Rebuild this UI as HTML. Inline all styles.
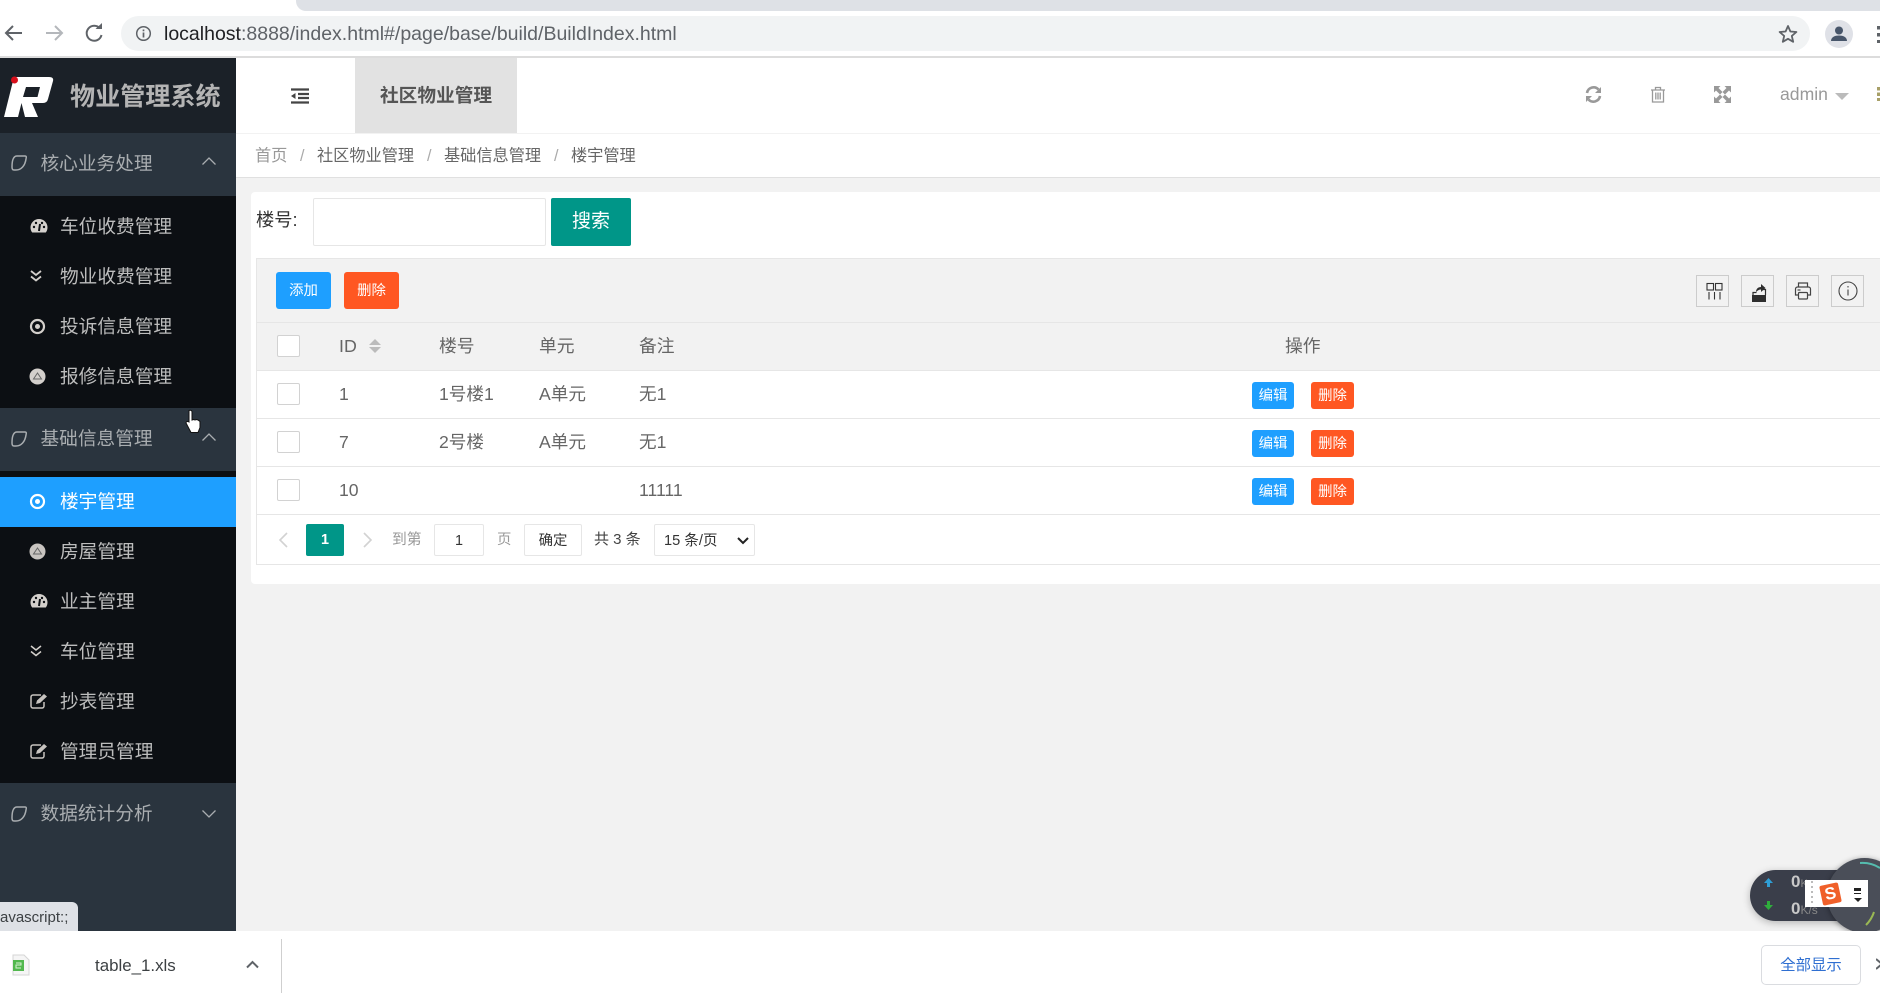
<!DOCTYPE html>
<html lang="zh-CN"><head><meta charset="utf-8"><title>物业管理系统</title>
<style>
*{box-sizing:border-box}
html,body{margin:0;padding:0;width:1880px;height:996px;overflow:hidden;background:#fff;font-family:"Liberation Sans","Noto Sans CJK SC",sans-serif}
.a{position:absolute}
.t{position:absolute;white-space:nowrap}
svg{position:absolute;display:block}
.nav{color:#bdbdbd;font-size:18.7px;line-height:26px;left:60px}
.grp{color:#a9adb0;font-size:18.7px;line-height:26px;left:40.500px}
.th{color:#666;font-size:17.8px;line-height:24px}
.td{color:#666;font-size:17.6px;line-height:24px}
.btn{position:absolute;color:#fff;text-align:center;border-radius:3px;font-size:14.4px}
.blue{background:#1e9fff}.red{background:#ff5722}
.cb{position:absolute;left:277px;width:23px;height:22px;background:#fff;border:1px solid #d2d2d2;border-radius:2px}
.hl{position:absolute;left:256px;right:0;height:1px;background:#e6e6e6}
.tool{position:absolute;top:275px;width:33px;height:32px;border:1px solid #ccc}
</style></head><body>

<!-- browser chrome -->
<div class="a" style="left:296px;top:0;width:1584px;height:11px;background:#dee1e6;border-bottom-left-radius:10px"></div>
<svg style="left:0;top:18px" width="110" height="32" viewBox="0 0 110 32" fill="none" stroke-width="2">
<path d="M22 15H7M13 8l-7 7 7 7" stroke="#5f6368"/>
<path d="M46 15h15M55 8l7 7-7 7" stroke="#b4b7bb"/>
<path d="M100 10.500a7.500 7.500 0 1 0 1.500 6.500" stroke="#5f6368"/><path d="M95.500 11h6.500v-6z" fill="#5f6368"/>
</svg>
<div class="a" style="left:121px;top:16px;width:1689px;height:35px;background:#f1f3f4;border-radius:18px"></div>
<svg style="left:134px;top:24px" width="19" height="19" viewBox="0 0 19 19" fill="none"><circle cx="9.500" cy="9.500" r="6.800" stroke="#5f6368" stroke-width="1.500"/><path d="M9.500 8.500v5M9.500 5.500v1.700" stroke="#5f6368" stroke-width="1.700"/></svg>
<div class="t" style="left:164px;top:21px;font-size:19.500px;line-height:27px;color:#5f6368"><span style="color:#202124">localhost</span>:8888/index.html#/page/base/build/BuildIndex.html</div>
<svg style="left:1777px;top:23px" width="22" height="22" viewBox="0 0 22 22"><path d="M11 3l2.400 5.500 6 .5-4.600 3.900 1.400 5.900L11 15.800 5.800 18.800l1.400-5.900L2.600 9l6-.5z" fill="none" stroke="#5f6368" stroke-width="1.800" stroke-linejoin="round"/></svg>
<div class="a" style="left:1825px;top:20px;width:28px;height:28px;border-radius:50%;background:#dfe1e7"></div>
<svg style="left:1825px;top:20px" width="28" height="28" viewBox="0 0 28 28"><circle cx="14" cy="10.500" r="4" fill="#47556a"/><path d="M6 21c0-4 4-5.500 8-5.500s8 1.500 8 5.500z" fill="#47556a"/></svg>
<div class="a" style="left:1877px;top:26px;width:3px;height:17px;background:repeating-linear-gradient(#5f6368 0 3.500px,transparent 3.500px 7px)"></div>
<div class="a" style="left:0;top:56px;width:1880px;height:2px;background:#dcdcdc"></div>

<!-- main bg -->
<div class="a" style="left:236px;top:177px;width:1644px;height:754px;background:#f2f2f2"></div>

<!-- sidebar -->
<div class="a" style="left:0;top:58px;width:236px;height:873px;background:#2a343e"></div>
<div class="a" style="left:0;top:58px;width:236px;height:75px;background:#1b2128"></div>
<svg style="left:0;top:70px" width="60" height="52" viewBox="0 0 60 52"><path fill-rule="evenodd" d="M14 7H49Q54 7 53 11L48 29Q47 33 43 33H32L38 47H25L21.500 33L18 47H4ZM26 17H40L37.500 27H23Z" fill="#fff"/><circle cx="14.500" cy="10" r="3.500" fill="#d8101c"/></svg>
<div class="t" style="left:70px;top:79px;font-size:25.100px;line-height:36px;font-weight:700;color:#b4b4b4">物业管理系统</div>

<div class="a" style="left:0;top:196px;width:236px;height:212px;background:#0c0f13"></div>
<div class="a" style="left:0;top:471px;width:236px;height:312px;background:#0c0f13"></div>
<div class="a" style="left:0;top:477px;width:236px;height:50px;background:#1e9fff"></div>

<svg style="left:10px;top:153px" width="18" height="20" viewBox="0 0 18 20"><path d="M7 3h8c1.500 0 1.500 1 1 3-1 7-5 11-10 11H4c-1.500 0-2-1-2-3 0-5 1-11 5-11z" fill="none" stroke="#a9adb0" stroke-width="1.500"/></svg>
<div class="t grp" style="top:151px">核心业务处理</div>
<svg style="left:201px;top:156px" width="16" height="10" viewBox="0 0 16 10"><path d="M1.500 8.500L8 2l6.500 6.500" fill="none" stroke="#a9adb0" stroke-width="1.300"/></svg>
<svg style="left:10px;top:429px" width="18" height="20" viewBox="0 0 18 20"><path d="M7 3h8c1.500 0 1.500 1 1 3-1 7-5 11-10 11H4c-1.500 0-2-1-2-3 0-5 1-11 5-11z" fill="none" stroke="#a9adb0" stroke-width="1.500"/></svg>
<div class="t grp" style="top:426px">基础信息管理</div>
<svg style="left:201px;top:432px" width="16" height="10" viewBox="0 0 16 10"><path d="M1.500 8.500L8 2l6.500 6.500" fill="none" stroke="#a9adb0" stroke-width="1.300"/></svg>
<svg style="left:10px;top:804px" width="18" height="20" viewBox="0 0 18 20"><path d="M7 3h8c1.500 0 1.500 1 1 3-1 7-5 11-10 11H4c-1.500 0-2-1-2-3 0-5 1-11 5-11z" fill="none" stroke="#a9adb0" stroke-width="1.500"/></svg>
<div class="t grp" style="top:801px">数据统计分析</div>
<svg style="left:201px;top:809px" width="16" height="10" viewBox="0 0 16 10"><path d="M1.500 1.500L8 8l6.500-6.500" fill="none" stroke="#a9adb0" stroke-width="1.300"/></svg>

<div class="t nav" style="top:214px">车位收费管理</div>
<div class="t nav" style="top:264px">物业收费管理</div>
<div class="t nav" style="top:314px">投诉信息管理</div>
<div class="t nav" style="top:364px">报修信息管理</div>
<div class="t nav" style="top:489px;color:#fff">楼宇管理</div>
<div class="t nav" style="top:539px">房屋管理</div>
<div class="t nav" style="top:589px">业主管理</div>
<div class="t nav" style="top:639px">车位管理</div>
<div class="t nav" style="top:689px">抄表管理</div>
<div class="t nav" style="top:739px">管理员管理</div>

<!-- sidebar icons -->
<svg style="left:30px;top:218px" width="18" height="16" viewBox="0 0 18 16"><path d="M9 1a8.500 8.500 0 0 0-8.500 8.500c0 2 .7 3.800 1.700 5h13.600c1-1.200 1.700-3 1.700-5A8.500 8.500 0 0 0 9 1z" fill="#d4d0cc"/><path d="M9 13l1-7" stroke="#0c0f13" stroke-width="2"/><g fill="#0c0f13"><circle cx="4" cy="9" r="1.200"/><circle cx="6" cy="5" r="1.200"/><circle cx="12" cy="5" r="1.200"/><circle cx="14" cy="9" r="1.200"/></g></svg>
<svg style="left:29px;top:268px" width="16" height="16" viewBox="0 0 16 16"><path d="M2 3l5 4 5-4M2 8.500l5 4 5-4" fill="none" stroke="#d4d0cc" stroke-width="1.800"/></svg>
<svg style="left:29px;top:318px" width="17" height="17" viewBox="0 0 17 17"><circle cx="8.500" cy="8.500" r="6.500" fill="none" stroke="#d4d0cc" stroke-width="2.200"/><circle cx="8.500" cy="8.500" r="2.500" fill="#d4d0cc"/></svg>
<svg style="left:29px;top:368px" width="17" height="17" viewBox="0 0 17 17"><circle cx="8.500" cy="8.500" r="8" fill="#d4d0cc"/><path d="M4.500 11h8l-4-6z" fill="none" stroke="#666" stroke-width="1"/></svg>
<svg style="left:29px;top:493px" width="17" height="17" viewBox="0 0 17 17"><circle cx="8.500" cy="8.500" r="6.500" fill="none" stroke="#fff" stroke-width="2.200"/><circle cx="8.500" cy="8.500" r="2.500" fill="#fff"/></svg>
<svg style="left:29px;top:543px" width="17" height="17" viewBox="0 0 17 17"><circle cx="8.500" cy="8.500" r="8" fill="#c8c4c0"/><path d="M4.500 11h8l-4-6z" fill="none" stroke="#666" stroke-width="1"/></svg>
<svg style="left:30px;top:593px" width="18" height="16" viewBox="0 0 18 16"><path d="M9 1a8.500 8.500 0 0 0-8.500 8.500c0 2 .7 3.800 1.700 5h13.600c1-1.200 1.700-3 1.700-5A8.500 8.500 0 0 0 9 1z" fill="#d4d0cc"/><path d="M9 13l1-7" stroke="#0c0f13" stroke-width="2"/><g fill="#0c0f13"><circle cx="4" cy="9" r="1.200"/><circle cx="6" cy="5" r="1.200"/><circle cx="12" cy="5" r="1.200"/><circle cx="14" cy="9" r="1.200"/></g></svg>
<svg style="left:29px;top:643px" width="16" height="16" viewBox="0 0 16 16"><path d="M2 3l5 4 5-4M2 8.500l5 4 5-4" fill="none" stroke="#d4d0cc" stroke-width="1.500"/></svg>
<svg style="left:30px;top:693px" width="18" height="16" viewBox="0 0 18 16"><path d="M11 2H3a2 2 0 0 0-2 2v9a2 2 0 0 0 2 2h9a2 2 0 0 0 2-2V9" fill="none" stroke="#c8c4c0" stroke-width="1.500"/><path d="M6 11l1-3.500L14 1l3 2.500L10 10z" fill="#c8c4c0"/></svg>
<svg style="left:30px;top:743px" width="18" height="16" viewBox="0 0 18 16"><path d="M11 2H3a2 2 0 0 0-2 2v9a2 2 0 0 0 2 2h9a2 2 0 0 0 2-2V9" fill="none" stroke="#c8c4c0" stroke-width="1.500"/><path d="M6 11l1-3.500L14 1l3 2.500L10 10z" fill="#c8c4c0"/></svg>

<!-- header -->
<div class="a" style="left:236px;top:133px;width:1644px;height:1px;background:#f2f2f2"></div>
<div class="a" style="left:236px;top:177px;width:1644px;height:1px;background:#e0e0e0"></div>
<svg style="left:291px;top:88px" width="18" height="16" viewBox="0 0 18 16"><path d="M0 1.500h18M0 14.500h18M7 6h11M7 10h11" stroke="#444" stroke-width="2.300"/><path d="M4.500 5v6L0 8z" fill="#444"/></svg>
<div class="a" style="left:355px;top:58px;width:162px;height:75px;background:#e2e2e2"></div>
<div class="t" style="left:380px;top:82px;font-size:18.700px;line-height:27px;font-weight:700;color:#555">社区物业管理</div>
<svg style="left:1585px;top:86px" width="17" height="17" viewBox="0 0 17 17" fill="none"><path d="M2 7a6.700 6.700 0 0 1 11.500-3.500M15 10a6.700 6.700 0 0 1-11.500 3.500" stroke="#999" stroke-width="2.600"/><path d="M16 1v6h-6zM1 16v-6h6z" fill="#999"/></svg>
<svg style="left:1650px;top:86px" width="16" height="17" viewBox="0 0 16 17" fill="none" stroke="#999" stroke-width="1.300"><path d="M1 4h14M5.500 4V1.500h5V4M2.500 4v12h11V4M5.800 6.500v7M8 6.500v7M10.200 6.500v7"/></svg>
<svg style="left:1714px;top:86px" width="17" height="17" viewBox="0 0 17 17"><path d="M0 0h6.500L4.500 2 8.500 6 6 8.500 2 4.500 0 6.500zM17 0v6.500L15 4.500 11 8.500 8.500 6 12.500 2 10.500 0zM0 17v-6.500L2 12.500 6 8.500 8.500 11 4.500 15l2 2zM17 17h-6.500l2-2-4-4L11 8.500l4 4 2-2z" fill="#999"/></svg>
<div class="t" style="left:1780px;top:82px;font-size:17.600px;line-height:25px;color:#999">admin</div>
<div class="a" style="left:1835px;top:93px;width:0;height:0;border-left:7px solid transparent;border-right:7px solid transparent;border-top:7px solid #bbb"></div>
<div class="a" style="left:1877px;top:87px;width:3px;height:14px;background:repeating-linear-gradient(#a8a068 0 3.500px,transparent 3.500px 5.500px)"></div>

<!-- breadcrumb -->
<div class="t" style="left:255px;top:144px;font-size:16.200px;line-height:24px;color:#999">首页</div>
<div class="t" style="left:300px;top:144px;font-size:16.200px;line-height:24px;color:#aaa">/</div>
<div class="t" style="left:317px;top:144px;font-size:16.200px;line-height:24px;color:#666">社区物业管理</div>
<div class="t" style="left:427px;top:144px;font-size:16.200px;line-height:24px;color:#aaa">/</div>
<div class="t" style="left:444px;top:144px;font-size:16.200px;line-height:24px;color:#666">基础信息管理</div>
<div class="t" style="left:554px;top:144px;font-size:16.200px;line-height:24px;color:#aaa">/</div>
<div class="t" style="left:571px;top:144px;font-size:16.200px;line-height:24px;color:#666">楼宇管理</div>

<!-- card -->
<div class="a" style="left:251px;top:192px;width:1629px;height:392px;background:#fff;border-radius:4px 0 0 4px"></div>
<div class="t" style="left:256px;top:207px;font-size:18.300px;line-height:26px;color:#333">楼号:</div>
<div class="a" style="left:313px;top:198px;width:233px;height:48px;background:#fff;border:1px solid #e6e6e6;border-radius:2px"></div>
<div class="a" style="left:551px;top:198px;width:80px;height:48px;background:#009688;border-radius:2px;color:#fff;font-size:19px;line-height:47px;text-align:center">搜索</div>

<!-- table -->
<div class="a" style="left:256px;top:258px;width:1624px;height:307px;border-left:1px solid #e6e6e6;border-bottom:1px solid #e6e6e6"></div>
<div class="a" style="left:257px;top:258px;width:1623px;height:112px;background:#f2f2f2"></div>
<div class="hl" style="top:258px"></div><div class="hl" style="top:322px"></div><div class="hl" style="top:370px"></div><div class="hl" style="top:418px"></div><div class="hl" style="top:466px"></div><div class="hl" style="top:514px"></div>

<div class="btn blue" style="left:276px;top:272px;width:55px;height:37px;line-height:38px">添加</div>
<div class="btn red" style="left:344px;top:272px;width:55px;height:37px;line-height:38px">删除</div>

<div class="tool" style="left:1696px"></div><div class="tool" style="left:1741px"></div><div class="tool" style="left:1786px"></div><div class="tool" style="left:1831px"></div>
<svg style="left:1705px;top:282px" width="19" height="18" viewBox="0 0 19 18" fill="none" stroke="#333" stroke-width="1.100"><rect x="2" y="1.500" width="6.500" height="6.500"/><rect x="10.500" y="1.500" width="6.500" height="6.500"/><path d="M4 10v7.500M9.500 10v7.500M15 10v7.500"/></svg>
<svg style="left:1750px;top:282px" width="18" height="21" viewBox="0 0 18 21"><path d="M2 13h14v7H2z" fill="#2e2e2e"/><path d="M3 13v-2.500h3.500M15.500 13V7.500h-3" fill="none" stroke="#2e2e2e" stroke-width="1.200"/><path d="M6 10c0-3 2-5 5-5V2l4.500 4-4.500 4V7.500C9 7.500 7.500 8.500 6 10z" fill="#2e2e2e"/></svg>
<svg style="left:1794px;top:282px" width="18" height="18" viewBox="0 0 18 18" fill="none" stroke="#444" stroke-width="1.200"><path d="M4.500 5V1h9v4M4.500 13H1.500V7a2 2 0 0 1 2-2h11a2 2 0 0 1 2 2v6h-3"/><rect x="4.500" y="10.500" width="9" height="6.500" rx="1"/><path d="M3.500 8h3"/></svg>
<svg style="left:1838px;top:281px" width="20" height="20" viewBox="0 0 20 20" fill="none" stroke="#444" stroke-width="1.100"><circle cx="10" cy="10" r="9"/><path d="M10 8.500v6M10 5v1.500"/></svg>

<div class="cb" style="top:335px"></div><div class="cb" style="top:383px"></div><div class="cb" style="top:431px"></div><div class="cb" style="top:479px"></div>

<div class="t th" style="left:339px;top:334px">ID</div>
<div class="a" style="left:369px;top:339px;width:0;height:0;border-left:6.500px solid transparent;border-right:6.500px solid transparent;border-bottom:6px solid #bbb"></div>
<div class="a" style="left:369px;top:347px;width:0;height:0;border-left:6.500px solid transparent;border-right:6.500px solid transparent;border-top:6px solid #bbb"></div>
<div class="t th" style="left:439px;top:334px">楼号</div>
<div class="t th" style="left:539px;top:334px">单元</div>
<div class="t th" style="left:639px;top:334px">备注</div>
<div class="t th" style="left:1285px;top:334px">操作</div>

<div class="t td" style="left:339px;top:382px">1</div>
<div class="t td" style="left:439px;top:382px">1号楼1</div>
<div class="t td" style="left:539px;top:382px">A单元</div>
<div class="t td" style="left:639px;top:382px">无1</div>
<div class="t td" style="left:339px;top:430px">7</div>
<div class="t td" style="left:439px;top:430px">2号楼</div>
<div class="t td" style="left:539px;top:430px">A单元</div>
<div class="t td" style="left:639px;top:430px">无1</div>
<div class="t td" style="left:339px;top:478px">10</div>
<div class="t td" style="left:639px;top:478px">11111</div>

<div class="btn blue" style="left:1252px;top:382px;width:42px;height:27px;line-height:28px">编辑</div>
<div class="btn red" style="left:1311px;top:382px;width:43px;height:27px;line-height:28px">删除</div>
<div class="btn blue" style="left:1252px;top:430px;width:42px;height:27px;line-height:28px">编辑</div>
<div class="btn red" style="left:1311px;top:430px;width:43px;height:27px;line-height:28px">删除</div>
<div class="btn blue" style="left:1252px;top:478px;width:42px;height:27px;line-height:28px">编辑</div>
<div class="btn red" style="left:1311px;top:478px;width:43px;height:27px;line-height:28px">删除</div>

<!-- pager -->
<svg style="left:277px;top:531px" width="12" height="18" viewBox="0 0 12 18"><path d="M10 2L3 9l7 7" fill="none" stroke="#d2d2d2" stroke-width="1.600"/></svg>
<div class="a" style="left:306px;top:524px;width:38px;height:32px;background:#009688;border-radius:2px;color:#fff;font-size:14.400px;font-weight:700;line-height:33px;text-align:center">1</div>
<svg style="left:362px;top:531px" width="12" height="18" viewBox="0 0 12 18"><path d="M2 2l7 7-7 7" fill="none" stroke="#d2d2d2" stroke-width="1.600"/></svg>
<div class="t" style="left:392px;top:529px;font-size:14.800px;line-height:22px;color:#999">到第</div>
<div class="a" style="left:434px;top:524px;width:50px;height:32px;background:#fff;border:1px solid #e6e6e6;border-radius:2px;color:#333;font-size:14.400px;line-height:32px;text-align:center">1</div>
<div class="t" style="left:497px;top:529px;font-size:14.400px;line-height:22px;color:#999">页</div>
<div class="a" style="left:524px;top:524px;width:58px;height:32px;background:#fff;border:1px solid #e6e6e6;border-radius:2px;color:#333;font-size:14.400px;line-height:32px;text-align:center">确定</div>
<div class="t" style="left:594px;top:529px;font-size:15px;line-height:22px;color:#444">共 3 条</div>
<div class="a" style="left:654px;top:524px;width:101px;height:32px;background:#fff;border:1px solid #e6e6e6;border-radius:2px"></div>
<div class="t" style="left:664px;top:530px;font-size:14.600px;line-height:22px;color:#333">15 条/页</div>
<svg style="left:736px;top:536px" width="14" height="10" viewBox="0 0 14 10"><path d="M2 2l5 5 5-5" fill="none" stroke="#222" stroke-width="2"/></svg>

<!-- speed widget -->
<div class="a" style="left:1750px;top:870px;width:130px;height:51px;background:#3a3e4a;border-radius:26px 0 0 26px;box-shadow:0 2px 8px rgba(0,0,0,.25)"></div>
<div class="a" style="left:1827px;top:858px;width:75px;height:75px;border-radius:50%;background:#4a4e58;box-shadow:0 1px 6px rgba(0,0,0,.4)"></div>
<svg style="left:1860px;top:860px" width="20" height="72" viewBox="0 0 20 72" fill="none" stroke-width="2"><path d="M0 3a33 33 0 0 1 20 5" stroke="#55bcae"/><path d="M14 52a33 33 0 0 1-8 13" stroke="#9ab854"/></svg>
<svg style="left:1761px;top:876px" width="15" height="40" viewBox="0 0 15 40"><path d="M7.500 2L12 7H9v4H6V7H3z" fill="#2f9fd6"/><path d="M7.500 34L12 29H9v-4H6v4H3z" fill="#2fae3c"/></svg>
<div class="t" style="left:1791px;top:870px;font-size:17px;font-weight:700;line-height:24px;color:#c8c8c8">0<span style="font-size:11px;font-weight:400;color:#888">K</span></div>
<div class="t" style="left:1791px;top:897px;font-size:17px;font-weight:700;line-height:24px;color:#c8c8c8">0<span style="font-size:12px;font-weight:400;color:#888">K/s</span></div>
<div class="a" style="left:1805px;top:880px;width:63px;height:27px;background:#fff"></div>
<div class="a" style="left:1811px;top:881px;width:2px;height:25px;background:repeating-linear-gradient(#bbb 0 2px,transparent 2px 5px)"></div>
<div class="a" style="left:1821px;top:884px;width:19px;height:20px;background:#f0602a;transform:rotate(-12deg);border-radius:2px;color:#fff;font-size:17px;font-weight:700;line-height:20px;text-align:center">S</div>
<div class="a" style="left:1854px;top:888px;width:7px;height:3px;background:#222"></div>
<div class="a" style="left:1854px;top:893px;width:7px;height:1px;background:#222"></div>
<div class="a" style="left:1854px;top:898px;width:0;height:0;border-left:4px solid transparent;border-right:4px solid transparent;border-top:4px solid #222"></div>

<!-- tooltip -->
<div class="a" style="left:0;top:902px;width:78px;height:29px;background:#dee1e6;border-top-right-radius:6px;overflow:hidden"><div class="t" style="left:0;top:4px;font-size:15px;line-height:24px;color:#3c4043">avascript:;</div></div>

<!-- download bar -->
<div class="a" style="left:0;top:931px;width:1880px;height:65px;background:#fff"></div>
<svg style="left:12px;top:954px" width="18" height="22" viewBox="0 0 18 22"><path d="M1 1h11l5 5v15H1z" fill="#f5f5f5" stroke="#d5d5d5"/><rect x="1" y="6" width="11" height="11" fill="#52b84e"/><path d="M4 9h5v2H4v3h5" fill="none" stroke="#d8f2d4" stroke-width="1"/></svg>
<div class="t" style="left:95px;top:953px;font-size:16.900px;line-height:25px;color:#3c4043">table_1.xls</div>
<svg style="left:246px;top:960px" width="13" height="9" viewBox="0 0 13 9"><path d="M1 7.500l5.500-5.500 5.500 5.500" fill="none" stroke="#5f6368" stroke-width="2"/></svg>
<div class="a" style="left:281px;top:939px;width:1px;height:54px;background:#cfcfcf"></div>
<div class="a" style="left:1761px;top:945px;width:100px;height:40px;border:1px solid #dadce0;border-radius:5px;color:#2f6fd1;font-size:15.400px;line-height:40px;text-align:center">全部显示</div>
<svg style="left:1876px;top:958px" width="4" height="12" viewBox="0 0 4 12"><path d="M0 1l6 5-6 5" fill="none" stroke="#5f6368" stroke-width="2"/></svg>

<!-- cursor -->
<svg style="left:185px;top:409px" width="18" height="25" viewBox="0 0 18 25"><path d="M4 1.500c1.500-.6 3 0 3 1.500v8l1.500-.5 1.500.5 1.500-.5 1.500.5 2 1.500v6l-2 5H6L1 14c0-1.500 1.500-2 3-1V3c0-.8 0-1.500 0-1.500z" fill="#fff" stroke="#111" stroke-width="1"/></svg>

</body></html>
